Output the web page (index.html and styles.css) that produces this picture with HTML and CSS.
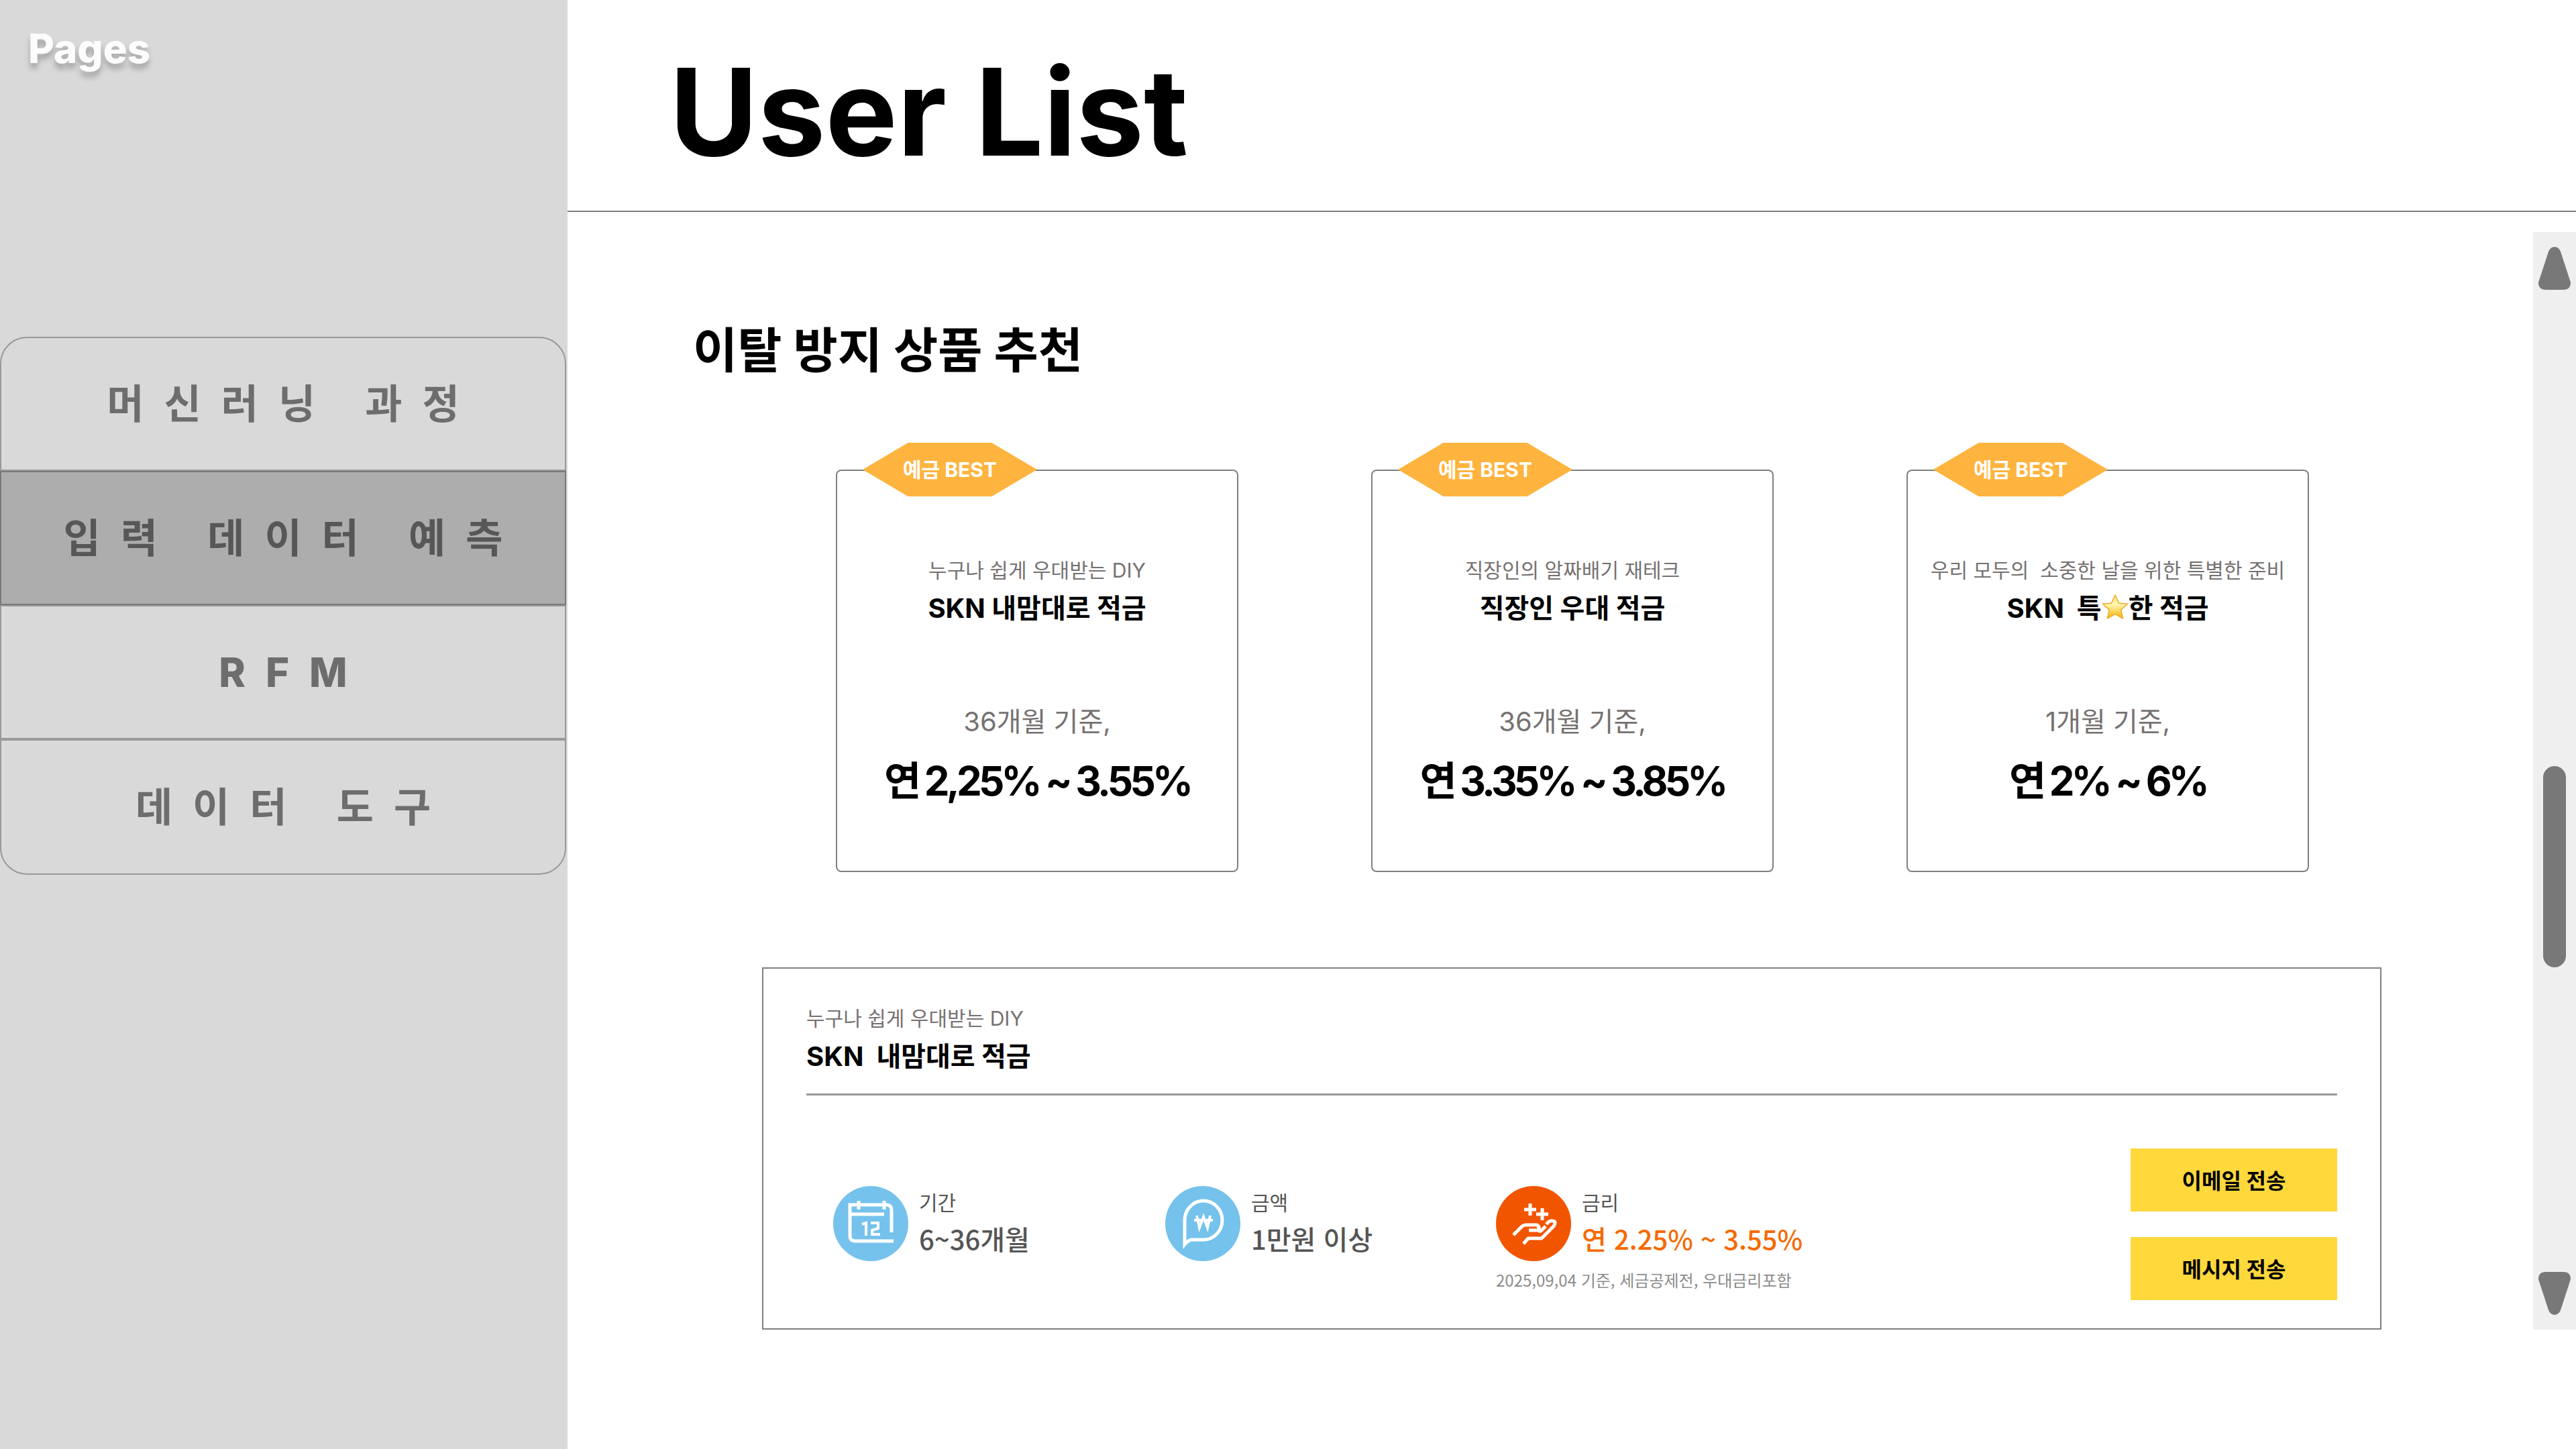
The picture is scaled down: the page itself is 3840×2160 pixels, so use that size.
FILE: index.html
```html
<!DOCTYPE html>
<html lang="ko">
<head>
<meta charset="utf-8">
<title>User List</title>
<link rel="stylesheet" href="styles.css">
</head>
<body>
<div class="app">
  <aside class="sidebar">
    <p class="brand">Pages</p>
    <nav class="menu">
      <a class="menu-item" href="#">머신러닝 과정</a>
      <a class="menu-item active" href="#" aria-current="page">입력 데이터 예측</a>
      <a class="menu-item latin" href="#">RFM</a>
      <a class="menu-item" href="#">데이터 도구</a>
    </nav>
  </aside>
  <main class="main">
    <header class="header"><h1>User List</h1></header>
    <div class="body">
      <div class="content">
        <h2>이탈 방지 상품 추천</h2>
        <section class="cards">
          <article class="card">
            <span class="badge">예금 BEST</span>
            <p class="sub">누구나 쉽게 우대받는 DIY</p>
            <h3 class="name">SKN 내맘대로 적금</h3>
            <p class="term">36개월 기준,</p>
            <p class="rate">연 2,25% ~ 3.55%</p>
          </article>
          <article class="card">
            <span class="badge">예금 BEST</span>
            <p class="sub">직장인의 알짜배기 재테크</p>
            <h3 class="name">직장인 우대 적금</h3>
            <p class="term">36개월 기준,</p>
            <p class="rate">연 3.35% ~ 3.85%</p>
          </article>
          <article class="card">
            <span class="badge">예금 BEST</span>
            <p class="sub">우리 모두의&nbsp; 소중한 날을 위한 특별한 준비</p>
            <h3 class="name">SKN&nbsp; 특<svg class="star" viewBox="0 0 40 40" role="img" aria-label="별"><defs><linearGradient id="gold" x1="0" y1="0" x2="0" y2="1"><stop offset="0" stop-color="#ffe98a"/><stop offset=".4" stop-color="#fff6b0"/><stop offset="1" stop-color="#f8b400"/></linearGradient></defs><path d="M20 2l5.300 11.900 13.200 1.400-9.800 8.800 2.900 12.900L20 30.400 8.400 37l2.900-12.900-9.800-8.800 13.200-1.400z" fill="url(#gold)" stroke="#f0a92c" stroke-width="1.500" stroke-linejoin="round"/></svg>한 적금</h3>
            <p class="term">1개월 기준,</p>
            <p class="rate">연 2% ~ 6%</p>
          </article>
        </section>
        <section class="detail">
          <div class="detail-head">
            <p class="sub">누구나 쉽게 우대받는 DIY</p>
            <h3 class="name">SKN&nbsp; 내맘대로 적금</h3>
          </div>
          <div class="detail-body">
            <dl class="facts">
              <div class="fact">
                <svg class="icon" viewBox="0 0 112 112" aria-hidden="true"><circle cx="56" cy="56" r="56" fill="#75c2ec"/><g fill="none" stroke="#fff" stroke-width="5"><path d="M87 69V36q0-8-8-8H25v46q0 8 8 8h57M26 42h50M38 22v13M76 22v13"/><path d="M43 57l6-2v19M56 55h11v8l-9 3v6h12" stroke-width="4"/></g></svg>
                <dt>기간</dt><dd>6~36개월</dd>
              </div>
              <div class="fact">
                <svg class="icon" viewBox="0 0 112 112" aria-hidden="true"><circle cx="56" cy="56" r="56" fill="#75c2ec"/><g fill="none" stroke="#fff" stroke-width="5"><path d="M29 87V51a28 29 0 1 1 28 29H39q-5 1-10 7z"/><path d="M47 44l4 18 6-16 6 16 4-18M43 51h28" stroke-width="4"/></g></svg>
                <dt>금액</dt><dd>1만원 이상</dd>
              </div>
              <div class="fact">
                <svg class="icon" viewBox="0 0 112 112" aria-hidden="true"><circle cx="56" cy="56" r="56" fill="#f25500"/><g fill="none" stroke="#fff" stroke-width="5" stroke-linejoin="round"><path d="M51 26v18M42 35h18M69 33v18M60 42h18"/><path d="M26 73l12-12q3-3 7-3h16q5 3 2 8H49M63 67h4l7-7"/><path d="M41 86l7-8h20l18-18q5-8-2-8-4-1-9 5"/></g></svg>
                <dt>금리</dt><dd class="hot">연 2.25% ~ 3.55%</dd>
                <dd class="note">2025,09,04 기준, 세금공제전, 우대금리포함</dd>
              </div>
            </dl>
            <div class="actions">
              <button type="button">이메일 전송</button>
              <button type="button">메시지 전송</button>
            </div>
          </div>
        </section>
      </div>
      <div class="scrollbar" aria-hidden="true">
        <svg class="arrow" viewBox="0 0 48 64"><path d="M15 7Q18 0 24 0t9 7l15 46q0 11-11 11H11Q0 64 0 53z"/></svg>
        <div class="thumb"></div>
        <svg class="arrow" viewBox="0 0 48 64"><path d="M15 57q3 7 9 7t9-7L48 11Q48 0 37 0H11Q0 0 0 11z"/></svg>
      </div>
    </div>
  </main>
</div>
</body>
</html>
```
FILE: styles.css
```css
* { box-sizing: border-box; margin: 0; padding: 0; }
body { font-family: Inter, "Noto Sans CJK KR", sans-serif; background: #fff; color: #000; }
.app { display: flex; min-height: 100vh; }

.sidebar { flex: none; width: 846px; background: #d9d9d9; }
.brand { height: 502px; padding: 36px 0 0 42px; font-size: 60px; line-height: 72px; font-weight: 800; color: #fcfcfc; text-shadow: 0 8px 8px rgba(0, 0, 0, .25); }
.menu { display: flex; flex-direction: column; margin-right: 2px; }
/* The left padding balances the tracking after the last letter. */
.menu-item { display: flex; align-items: center; justify-content: center; height: 200px; padding-left: 30px; border: 2px solid #999; color: #6d6d6d; font-size: 60px; line-height: 72px; font-weight: 700; letter-spacing: 30px; text-decoration: none; }
.menu-item.latin { font-weight: 800; }
.menu-item.active { background: #adadad; border-color: #7a7a7a; color: #575757; }
.menu-item:first-child { border-radius: 40px 40px 0 0; }
.menu-item:last-child { height: 202px; border-radius: 0 0 40px 40px; }

.main { flex: 1; display: flex; flex-direction: column; }
.header { height: 316px; padding: 58px 0 0 152px; border-bottom: 2px solid #808080; }
h1 { font-size: 180px; line-height: 218px; font-weight: 700; }
.body { display: flex; align-items: stretch; justify-content: space-between; padding-top: 30px; }
.content { flex: 1; padding: 132px 226px 0 290px; }
h2 { margin-left: -103px; font-size: 72px; line-height: 88px; font-weight: 700; }

.cards { display: grid; grid-template-columns: repeat(3, 600px); justify-content: space-between; margin: 134px 108px 0 110px; }
.card { position: relative; height: 600px; padding-top: 124px; border: 2px solid #808080; border-radius: 8px; text-align: center; }
.badge { position: absolute; top: -42px; left: 38px; width: 260px; height: 80px; background: #ffb43f; clip-path: polygon(0 50%, 26% 0, 74% 0, 100% 50%, 74% 100%, 26% 100%); color: #fff; font-size: 30px; line-height: 80px; font-weight: 700; }
.sub { font-size: 30px; line-height: 48px; color: #767171; }
.name { font-size: 40px; line-height: 66px; font-weight: 700; }
.star { width: 40px; height: 40px; vertical-align: -4px; }
.term { margin-top: 106px; font-size: 40px; line-height: 60px; color: #767171; }
.rate { margin-top: 14px; font-size: 60px; line-height: 88px; font-weight: 700; letter-spacing: -.08em; }

.detail { margin-top: 142px; padding: 50px 64px 42px; border: 2px solid #808080; height: 540px; }
.detail-head { padding-bottom: 22px; border-bottom: 3px solid #999; }
.detail-body { display: flex; justify-content: space-between; padding-top: 79px; }
.facts { display: grid; grid-template-columns: 495px 493px auto; padding: 56px 0 0 40px; }
.fact { display: grid; grid-template-columns: 112px auto; grid-template-rows: 46px 66px 32px; column-gap: 16px; align-content: start; color: #555; font-family: "Noto Sans CJK KR", sans-serif; }
.icon { grid-row: 1 / 3; width: 112px; height: 112px; }
dt { font-size: 30px; line-height: 46px; }
dd { font-size: 40px; line-height: 64px; font-weight: 500; }
.hot { color: #f56a00; }
.note { grid-column: 1 / -1; font-size: 24px; line-height: 56px; font-weight: 400; color: #8c8c8c; }
.actions { display: flex; flex-direction: column; gap: 38px; }
button { width: 308px; height: 94px; padding-top: 4px; border: 0; background: #ffd83c; color: #000; font: 700 32px/48px Inter, "Noto Sans CJK KR", sans-serif; }

.scrollbar { display: flex; flex-direction: column; align-items: center; width: 64px; padding: 22px 0; background: #efefef; }
.arrow { width: 48px; height: 64px; fill: #787878; }
.thumb { width: 34px; height: 300px; margin: 710px 0 auto; border-radius: 17px; background: #787878; }
```
